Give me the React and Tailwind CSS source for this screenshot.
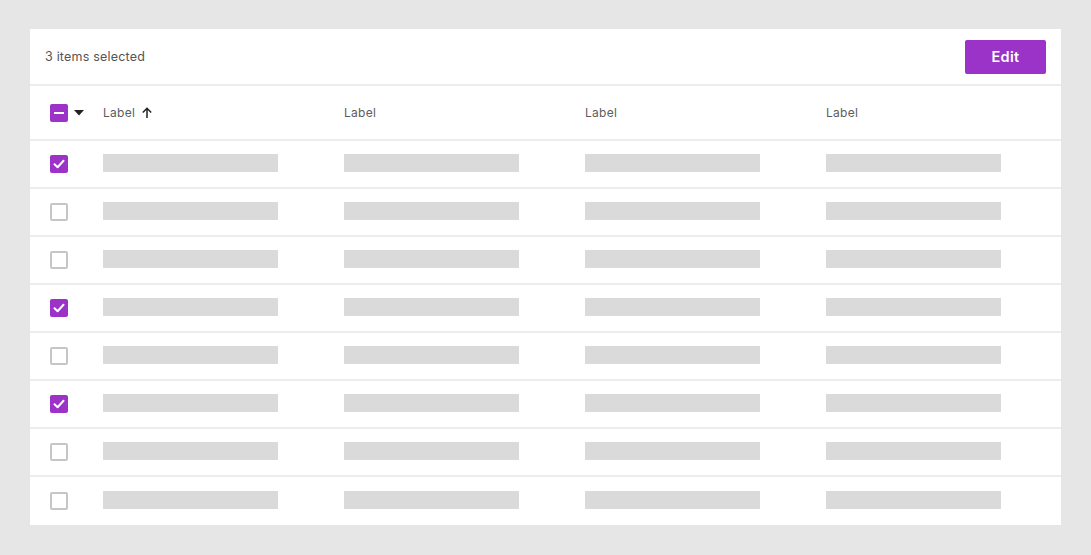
import React from 'react';

const rows = [true, false, false, true, false, true, false, false];
const cols = [0, 1, 2, 3];

const CheckBox = ({ checked }) => (
    checked ? (
        <div className="w-[18px] h-[18px] rounded-[2px] bg-[#9b33c9] flex items-center justify-center">
            <svg width="12" height="10" viewBox="0 0 12 10" fill="none">
                <path d="M1.5 5.2 L4.6 8.2 L10.5 1.8" stroke="white" strokeWidth="2" strokeLinecap="round" strokeLinejoin="round" />
            </svg>
        </div>
    ) : (
        <div className="w-[18px] h-[18px] rounded-[2px] border-2 border-[#c6c6c6] bg-white" />
    )
);

const App = () => {
    return (
        <div className="w-[1091px] h-[555px] bg-[#e6e6e6] pt-[29px] px-[30px]" style={{ fontFamily: 'Inter, "Noto Sans", sans-serif' }}>
            <div className="w-[1031px] bg-white">
                <header className="h-[57px] flex items-center justify-between pl-[15px] pr-[15px] border-b-2 border-[#ececec]">
                    <span className="mt-[2px] text-[12.5px] text-[#555] tracking-[0.2px]">3 items selected</span>
                    <button className="w-[81px] h-[34px] mt-[1px] rounded-[2px] bg-[#9b33c9] text-white text-[14.5px] font-semibold tracking-[0.3px]">Edit</button>
                </header>

                <div className="h-[55px] pt-[1px] flex items-center pl-[20px] border-b-2 border-[#ececec]">
                    <div className="w-[53px] shrink-0 flex items-center">
                        <div className="w-[18px] h-[18px] rounded-[2px] bg-[#9b33c9] flex items-center justify-center">
                            <div className="w-[10px] h-[2px] bg-white" />
                        </div>
                        <svg className="ml-[6px]" width="10" height="6" viewBox="0 0 10 6">
                            <path d="M0 0 H10 L5 5.5 Z" fill="#222" />
                        </svg>
                    </div>
                    {cols.map(c => (
                        <div key={c} className="w-[241px] shrink-0 flex items-center text-[12px] text-[#5c5c5c] tracking-[0.3px]">
                            <span>Label</span>
                            {c === 0 && (
                                <svg className="ml-[6px]" width="12" height="12" viewBox="0 0 12 12" fill="none">
                                    <path d="M6 11 V1.5 M1.8 5.5 L6 1.3 L10.2 5.5" stroke="#222" strokeWidth="1.5" />
                                </svg>
                            )}
                        </div>
                    ))}
                </div>

                {rows.map((checked, i) => (
                    <div key={i} className={`h-[48px] flex items-center pl-[20px] ${i < rows.length - 1 ? 'border-b-2 border-[#ececec]' : ''}`}>
                        <div className="w-[53px] shrink-0 flex items-center">
                            <CheckBox checked={checked} />
                        </div>
                        {cols.map(c => (
                            <div key={c} className="w-[241px] shrink-0">
                                <div className="w-[175px] h-[18px] mb-[2px] bg-[#dadada]" />
                            </div>
                        ))}
                    </div>
                ))}
            </div>
        </div>
    );
};

export default App;
